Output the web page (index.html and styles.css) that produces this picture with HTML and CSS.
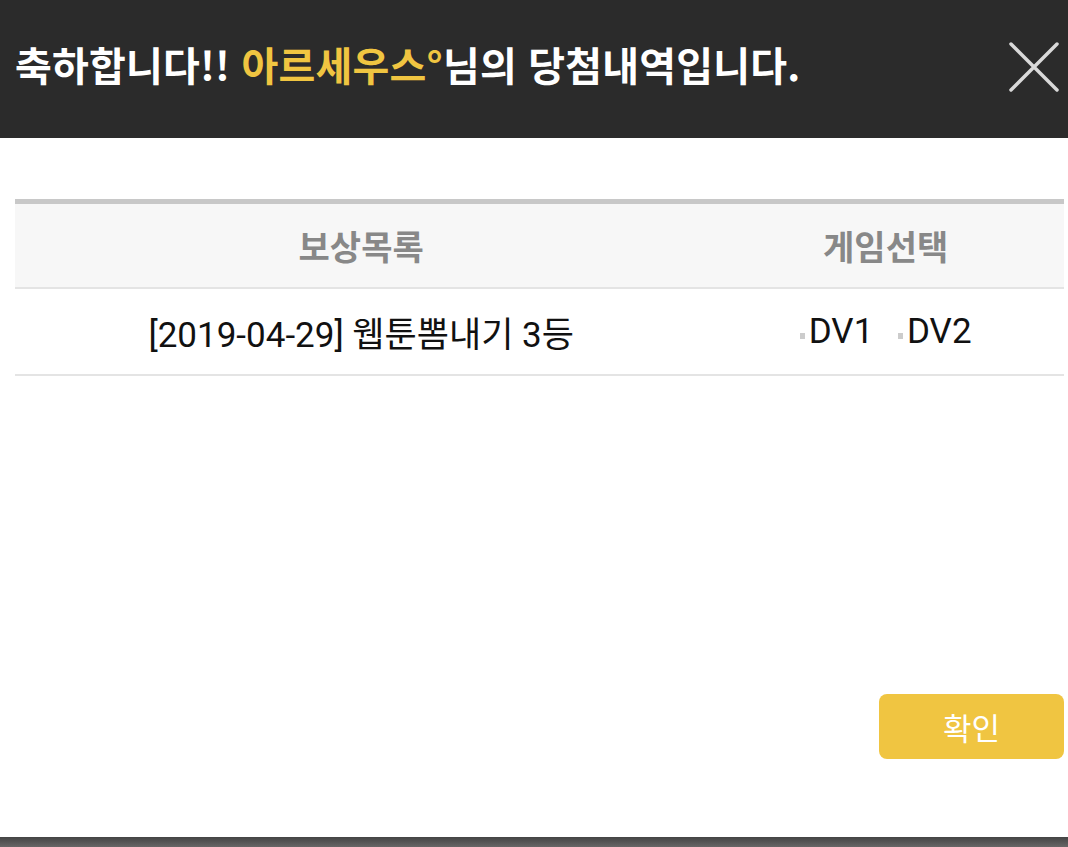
FILE: index.html
```html
<!DOCTYPE html>
<html lang="ko">
<head>
    <meta charset="UTF-8">
    <meta name="viewport" content="width=device-width, initial-scale=1.0">
    <title>당첨내역</title>
    <link rel="stylesheet" href="styles.css">
</head>
<body>
    <div class="popup">
        <header class="popup-header">
            <h1 class="title">축하합니다!! <span class="nick">아르세우스°</span>님의 당첨내역입니다.</h1>
            <button class="close" type="button" aria-label="닫기">
                <svg width="50" height="50" viewBox="0 0 50 50">
                    <path d="M2 2 L48 48 M48 2 L2 48" stroke="#d9d9d9" stroke-width="3.5" stroke-linecap="round" fill="none"/>
                </svg>
            </button>
        </header>

        <main class="popup-body">
            <table class="reward-table">
                <thead>
                    <tr>
                        <th class="col-reward">보상목록</th>
                        <th class="col-game">게임선택</th>
                    </tr>
                </thead>
                <tbody>
                    <tr>
                        <td>[2019-04-29] 웹툰뽐내기 3등</td>
                        <td>
                            <label class="game"><span class="check"></span>DV1</label>
                            <label class="game"><span class="check"></span>DV2</label>
                        </td>
                    </tr>
                </tbody>
            </table>

            <div class="actions">
                <button class="confirm" type="button">확인</button>
            </div>
        </main>

        <div class="bottom-bar"></div>
    </div>
</body>
</html>
```

FILE: styles.css
```css
* {
    margin: 0;
    padding: 0;
    box-sizing: border-box;
}

body {
    font-family: Roboto, "Noto Sans CJK KR", sans-serif;
    background-color: #fff;
    color: #111;
}

.popup {
    display: flex;
    flex-direction: column;
    min-height: 847px;
}

.popup-header {
    height: 138px;
    background-color: #2b2b2b;
    display: flex;
    align-items: center;
    justify-content: space-between;
    padding: 0 9px 10px 15px;
}

.title {
    font-family: "Noto Sans CJK KR", sans-serif;
    font-size: 40px;
    font-weight: 700;
    color: #fff;
    letter-spacing: 0.2px;
}

.nick {
    color: #f0c541;
}

.close {
    background: none;
    border: none;
    width: 50px;
    height: 50px;
    cursor: pointer;
    margin-top: 6px;
}

.popup-body {
    flex: 1;
    display: flex;
    flex-direction: column;
    padding: 61px 4px 0 15px;
}

.reward-table {
    width: 100%;
    border-collapse: collapse;
    border-top: 5px solid #c8c8c8;
}

.reward-table th {
    height: 86px;
    background-color: #f7f7f7;
    color: #888;
    font-family: "Noto Sans CJK KR", sans-serif;
    font-size: 34px;
    font-weight: 700;
    border-bottom: 2px solid #e4e4e4;
}

.col-reward {
    width: 66%;
}

.reward-table td {
    height: 87px;
    text-align: center;
    font-size: 35px;
    border-bottom: 2px solid #e4e4e4;
}

.game {
    margin: 0 8px;
}

.check {
    display: inline-block;
    width: 5px;
    height: 6px;
    background-color: #ccc;
    margin-right: 4px;
    vertical-align: 4px;
}

.actions {
    margin-top: auto;
    display: flex;
    justify-content: flex-end;
    padding-bottom: 78px;
}

.confirm {
    width: 185px;
    height: 65px;
    border: none;
    border-radius: 8px;
    background-color: #f0c541;
    color: #fff;
    font-family: "Noto Sans CJK KR", sans-serif;
    font-size: 31px;
    cursor: pointer;
}

.bottom-bar {
    height: 10px;
    background: linear-gradient(#444, #666);
}
```
